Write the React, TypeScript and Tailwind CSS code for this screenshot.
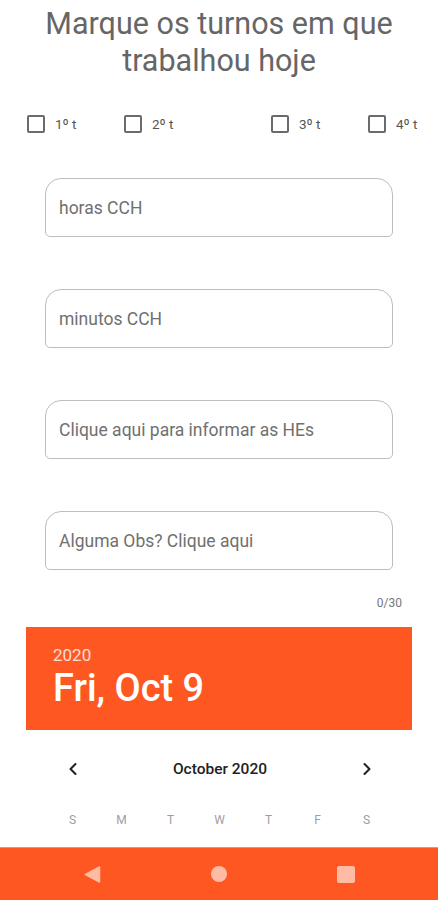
import { ChevronLeft, ChevronRight } from "lucide-react";

const shifts = [
  { label: "1º t", width: "w-[97px]" },
  { label: "2º t", width: "w-[147px]" },
  { label: "3º t", width: "w-[97px]" },
  { label: "4º t", width: "w-[60px]" },
];

const fields = [
  "horas CCH",
  "minutos CCH",
  "Clique aqui para informar as HEs",
  "Alguma Obs? Clique aqui",
];

const weekDays = ["S", "M", "T", "W", "T", "F", "S"];

export default function App() {
  return (
    <div
      className="relative w-[438px] h-[900px] overflow-hidden bg-white flex flex-col"
      style={{ fontFamily: "Roboto, 'Noto Sans', sans-serif" }}
    >
      <h1 className="pt-[5px] text-center text-[30.5px] leading-[37px] text-[#666666] font-normal">
        Marque os turnos em que
        <br />
        trabalhou hoje
      </h1>

      <div className="mt-[35px] flex pl-[27px]">
        {shifts.map((s) => (
          <label key={s.label} className={`${s.width} flex items-center gap-[10px]`}>
            <span className="w-[18px] h-[18px] rounded-[2px] border-2 border-[#6b6b6b]" />
            <span className="text-[13.5px] text-[#555555]">{s.label}</span>
          </label>
        ))}
      </div>

      <div className="mt-[44px] flex flex-col gap-[52px] pl-[45px] pr-[45px]">
        {fields.map((f) => (
          <div
            key={f}
            className="h-[59px] border border-[#bdbdbd] rounded-t-[16px] rounded-b-[5px] flex items-center pl-[13px] text-[17.5px] text-[#707070]"
          >
            {f}
          </div>
        ))}
      </div>

      <div className="mt-[25px] pr-[36px] text-right text-[12px] leading-[16px] text-[#777777]">
        0/30
      </div>

      <div className="mt-[16px] mx-[26px] h-[103px] bg-[#ff5722] flex flex-col pl-[27px] pt-[18px]">
        <div className="text-[17px] leading-[20px] text-white/80">2020</div>
        <div className="mt-[2px] text-[38px] leading-[42px] font-medium text-white">
          Fri, Oct 9
        </div>
      </div>

      <div className="mx-[26px] flex items-center justify-between pl-[37px] pr-[35px] mt-[28px] h-[22px]">
        <ChevronLeft size={20} strokeWidth={2.5} className="text-[#222222]" />
        <span className="text-[15.5px] font-medium text-[#222222]">October 2020</span>
        <ChevronRight size={20} strokeWidth={2.5} className="text-[#222222]" />
      </div>

      <div className="mt-[32px] grid grid-cols-7 w-[343px] ml-[48px]">
        {weekDays.map((d, i) => (
          <span key={i} className="text-center text-[12px] leading-[16px] text-[#9e9e9e]">
            {d}
          </span>
        ))}
      </div>

      <div className="absolute bottom-0 left-0 right-0 h-[53px] bg-[#ff5722] border-t border-[#ff8a65] flex items-center justify-center gap-[110px]">
        <svg width="17" height="17" viewBox="0 0 17 17">
          <path d="M15.5 1 L1.5 8.5 L15.5 16 Z" fill="#ffbba3" strokeLinejoin="round" stroke="#ffbba3" strokeWidth="1.5" />
        </svg>
        <span className="w-[16px] h-[16px] rounded-full bg-[#ffbba3]" />
        <span className="w-[18px] h-[17px] rounded-[2px] bg-[#ffbba3]" />
      </div>
    </div>
  );
}
